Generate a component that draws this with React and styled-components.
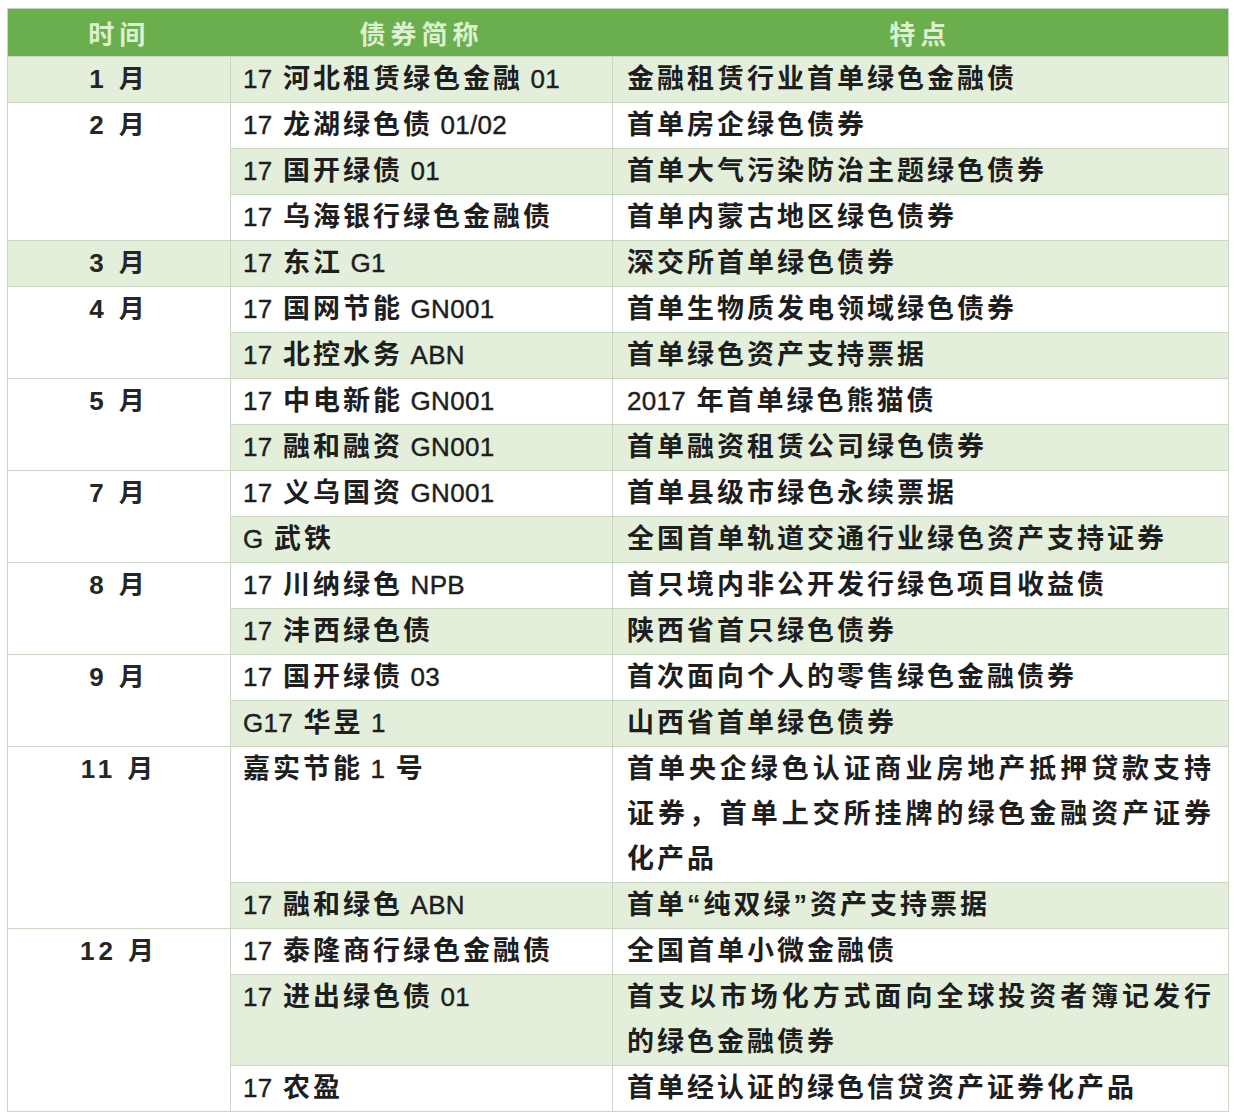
import React from "react";
import styled, { createGlobalStyle } from "styled-components";

const Global = createGlobalStyle`
  html, body { margin: 0; padding: 0; background: #ffffff; }
  body {
    font-family: "Liberation Sans", "Noto Sans CJK SC", sans-serif;
    color: #1e1e1e;
  }
`;

const Page = styled.div`
  padding: 8px 6px 6px 7px;
`;

const Table = styled.table`
  width: 1221px;
  border-collapse: collapse;
  table-layout: fixed;
  border: 1px solid #c8d4c2;
`;

const Col = styled.col`
  width: ${(p) => p.$w}px;
`;

const HeadCell = styled.th`
  height: 47px;
  padding: 0;
  background: #6aae4d;
  color: #dcf1cf;
  font-size: 26px;
  font-weight: 700;
  letter-spacing: 5px;
  text-align: center;
  vertical-align: middle;
  border: none;
  border-bottom: 1px solid #c8dcc0;
`;

const MonthCell = styled.td`
  padding: 0;
  background: ${(p) => (p.$green ? "#e3efdb" : "#ffffff")};
  border: 1px solid #c9d7c2;
  vertical-align: top;
  text-align: center;
  font-size: 26px;
  line-height: 45px;
  font-weight: 700;
  letter-spacing: 4px;
  color: #262626;
`;

const Cell = styled.td`
  padding: 0 ${(p) => p.$pr}px 0 ${(p) => p.$pl}px;
  background: ${(p) => (p.$green ? "#e3efdb" : "#ffffff")};
  border: 1px solid #c9d7c2;
  vertical-align: top;
  text-align: justify;
  font-size: 27px;
  line-height: 45px;
  font-weight: 600;
  letter-spacing: 3px;
`;

const Latin = styled.span`
  font-size: 26px;
  font-weight: 400;
  letter-spacing: 0.3px;
  -webkit-text-stroke: 0.4px #1e1e1e;
`;

const groups = [
  { m: "1 月", rows: [["17 河北租赁绿色金融 01", "金融租赁行业首单绿色金融债"]] },
  {
    m: "2 月",
    rows: [
      ["17 龙湖绿色债 01/02", "首单房企绿色债券"],
      ["17 国开绿债 01", "首单大气污染防治主题绿色债券"],
      ["17 乌海银行绿色金融债", "首单内蒙古地区绿色债券"],
    ],
  },
  { m: "3 月", rows: [["17 东江 G1", "深交所首单绿色债券"]] },
  {
    m: "4 月",
    rows: [
      ["17 国网节能 GN001", "首单生物质发电领域绿色债券"],
      ["17 北控水务 ABN", "首单绿色资产支持票据"],
    ],
  },
  {
    m: "5 月",
    rows: [
      ["17 中电新能 GN001", "2017 年首单绿色熊猫债"],
      ["17 融和融资 GN001", "首单融资租赁公司绿色债券"],
    ],
  },
  {
    m: "7 月",
    rows: [
      ["17 义乌国资 GN001", "首单县级市绿色永续票据"],
      ["G 武铁", "全国首单轨道交通行业绿色资产支持证券"],
    ],
  },
  {
    m: "8 月",
    rows: [
      ["17 川纳绿色 NPB", "首只境内非公开发行绿色项目收益债"],
      ["17 沣西绿色债", "陕西省首只绿色债券"],
    ],
  },
  {
    m: "9 月",
    rows: [
      ["17 国开绿债 03", "首次面向个人的零售绿色金融债券"],
      ["G17 华昱 1", "山西省首单绿色债券"],
    ],
  },
  {
    m: "11 月",
    rows: [
      [
        "嘉实节能 1 号",
        "首单央企绿色认证商业房地产抵押贷款支持证券，首单上交所挂牌的绿色金融资产证券化产品",
      ],
      ["17 融和绿色 ABN", "首单“纯双绿”资产支持票据"],
    ],
  },
  {
    m: "12 月",
    rows: [
      ["17 泰隆商行绿色金融债", "全国首单小微金融债"],
      ["17 进出绿色债 01", "首支以市场化方式面向全球投资者簿记发行的绿色金融债券"],
      ["17 农盈", "首单经认证的绿色信贷资产证券化产品"],
    ],
  },
];

function Mixed({ text }) {
  const parts = text.split(/( ?[A-Za-z0-9/]+)/);
  return (
    <>
      {parts.map((p, i) =>
        i % 2 === 1 ? <Latin key={i}>{p}</Latin> : <React.Fragment key={i}>{p}</React.Fragment>
      )}
    </>
  );
}

export default function App() {
  let idx = 0;
  const trs = [];
  groups.forEach((g) => {
    g.rows.forEach((r, j) => {
      const green = idx % 2 === 0;
      trs.push(
        <tr key={idx}>
          {j === 0 && (
            <MonthCell rowSpan={g.rows.length} $green={green}>
              {g.m}
            </MonthCell>
          )}
          <Cell $green={green} $pl={12} $pr={8}>
            <Mixed text={r[0]} />
          </Cell>
          <Cell $green={green} $pl={14} $pr={14}>
            <Mixed text={r[1]} />
          </Cell>
        </tr>
      );
      idx += 1;
    });
  });

  return (
    <Page>
      <Global />
      <Table>
        <colgroup>
          <Col $w={223} />
          <Col $w={382} />
          <Col $w={616} />
        </colgroup>
        <thead>
          <tr>
            <HeadCell>时间</HeadCell>
            <HeadCell>债券简称</HeadCell>
            <HeadCell>特点</HeadCell>
          </tr>
        </thead>
        <tbody>{trs}</tbody>
      </Table>
    </Page>
  );
}
